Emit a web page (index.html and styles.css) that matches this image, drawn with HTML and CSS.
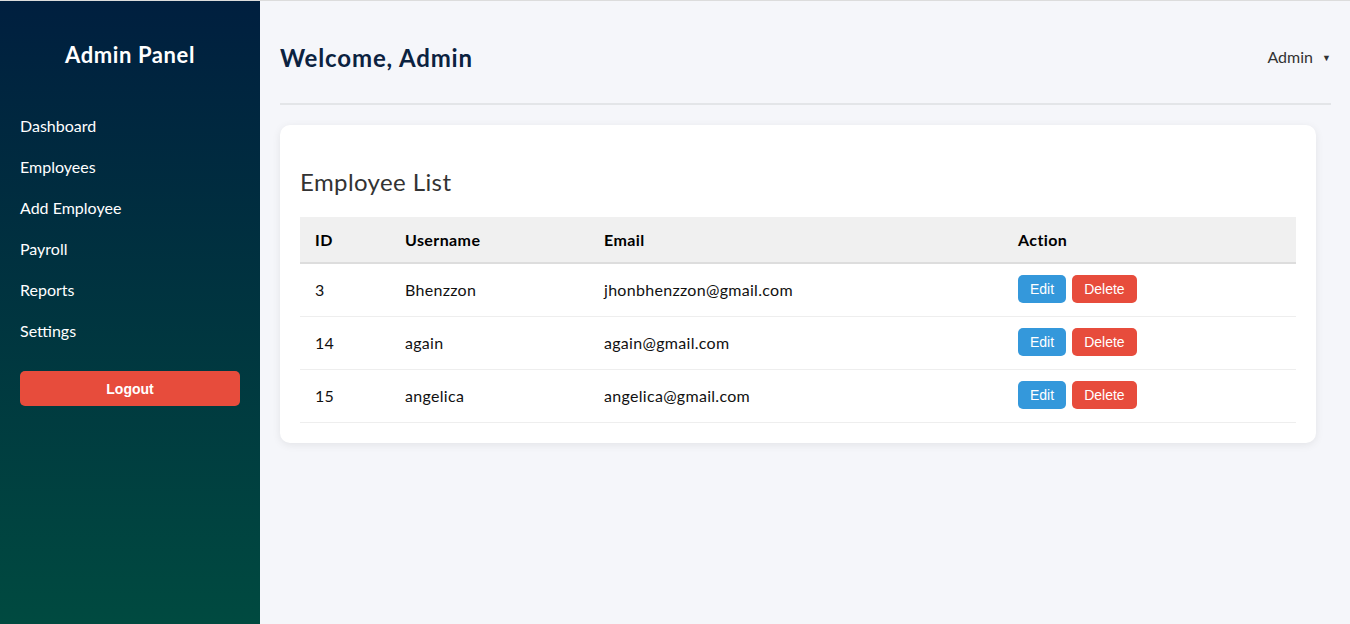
FILE: index.html
```html
<!DOCTYPE html>
<html>
<head>
<meta charset="utf-8">
<link rel="stylesheet" href="styles.css">
</head>
<body>
<div class="app">
  <aside class="sidebar">
    <h2 class="brand">Admin Panel</h2>
    <nav class="nav">
      <a href="#">Dashboard</a>
      <a href="#">Employees</a>
      <a href="#">Add Employee</a>
      <a href="#">Payroll</a>
      <a href="#">Reports</a>
      <a href="#">Settings</a>
    </nav>
    <button class="logout">Logout</button>
  </aside>
  <main class="main">
    <header class="topbar">
      <h1 class="welcome">Welcome, Admin</h1>
      <div class="user">Admin <span class="caret">&#9660;</span></div>
    </header>
    <section class="card">
      <h2 class="card-title">Employee List</h2>
      <table class="table">
        <colgroup>
          <col class="c-id"><col class="c-user"><col class="c-email"><col class="c-action">
        </colgroup>
        <thead>
          <tr><th>ID</th><th>Username</th><th>Email</th><th>Action</th></tr>
        </thead>
        <tbody>
          <tr><td>3</td><td>Bhenzzon</td><td>jhonbhenzzon@gmail.com</td><td><button class="btn edit">Edit</button><button class="btn del">Delete</button></td></tr>
          <tr><td>14</td><td>again</td><td>again@gmail.com</td><td><button class="btn edit">Edit</button><button class="btn del">Delete</button></td></tr>
          <tr><td>15</td><td>angelica</td><td>angelica@gmail.com</td><td><button class="btn edit">Edit</button><button class="btn del">Delete</button></td></tr>
        </tbody>
      </table>
    </section>
  </main>
</div>
</body>
</html>
```
FILE: styles.css
```css
* { box-sizing: border-box; }
html, body { margin: 0; padding: 0; }
body {
  font-family: "Lato", "Open Sans", sans-serif;
  background: #f5f6fa;
  border-top: 1px solid #dcdcdc;
  height: 624px;
  overflow: hidden;
}
.app { display: flex; height: 623px; }
.sidebar {
  width: 260px;
  flex: 0 0 260px;
  background: linear-gradient(180deg, #001f3f 0%, #004a40 100%);
  color: #fff;
  padding: 20px 20px;
  display: flex;
  flex-direction: column;
}
.brand {
  margin: 20px 0 36px;
  text-align: center;
  font-size: 22px;
  font-weight: 700;
  line-height: 28px;
  letter-spacing: 0.6px;
}
.nav { display: flex; flex-direction: column; }
.nav a {
  color: #fff;
  text-decoration: none;
  font-size: 16px;
  line-height: 21px;
  padding: 10px 0;
}
.logout {
  margin-top: 20px;
  height: 35px;
  border: none;
  border-radius: 5px;
  background: #e74c3c;
  color: #fff;
  font-family: "Liberation Sans", Arial, sans-serif;
  font-weight: 700;
  font-size: 14px;
}
.main { flex: 1; padding: 20px 19px 20px 20px; }
.topbar {
  display: flex;
  align-items: center;
  justify-content: space-between;
  padding: 20px 0 28px;
  border-bottom: 2px solid #e3e5e8;
}
.welcome {
  margin: 0;
  font-size: 24px;
  line-height: 34px;
  font-weight: 700;
  color: #0b2240;
  letter-spacing: 0.85px;
}
.user { font-size: 16px; color: #333; margin-top: -4px; }
.caret { font-size: 9px; margin-left: 5px; vertical-align: 2px; }
.card {
  margin: 20px 15px 0 0;
  background: #fff;
  border-radius: 10px;
  box-shadow: 0 2px 8px rgba(0,0,0,0.08);
  padding: 20px;
}
.card-title {
  margin: 21px 0 19px;
  font-size: 24px;
  font-weight: 400;
  line-height: 32px;
  color: #333;
  letter-spacing: 0.4px;
}
.table { width: 100%; border-collapse: collapse; font-size: 16px; color: #111; letter-spacing: 0.3px; }
.c-id { width: 90px; }
.c-user { width: 199px; }
.c-email { width: 414px; }
.table th {
  background: #f0f0f0;
  text-align: left;
  font-weight: 700;
  padding: 0 15px 1px;
  height: 46px;
  border-bottom: 2px solid #ddd;
  color: #000;
  letter-spacing: 0.4px;
}
.table td {
  padding: 0 15px 1px;
  height: 53px;
  border-bottom: 1px solid #eee;
}
.btn {
  border: none;
  border-radius: 5px;
  color: #fff;
  font-family: "Liberation Sans", Arial, sans-serif;
  font-size: 14px;
  line-height: 16px;
  padding: 6px 12px;
  margin-right: 6px;
  vertical-align: middle;
  letter-spacing: 0;
}
.edit { background: #3498db; }
.del { background: #e74c3c; }
```
